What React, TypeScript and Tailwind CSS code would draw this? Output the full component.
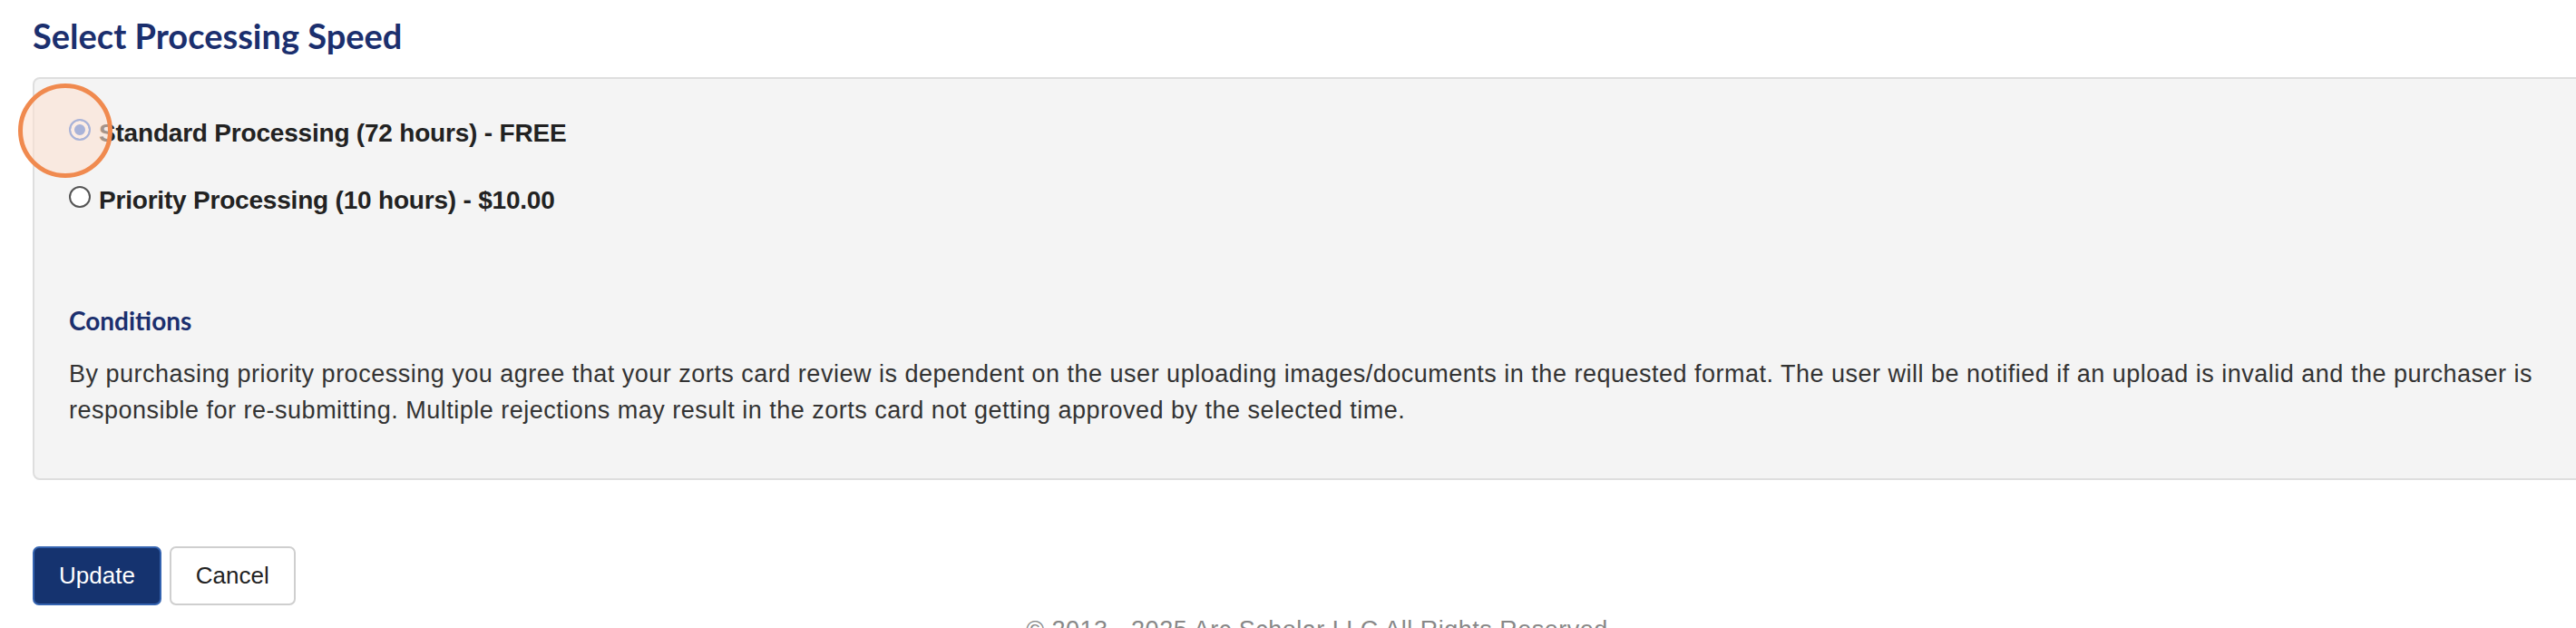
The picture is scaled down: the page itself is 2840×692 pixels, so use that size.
import React from "react";

const heading = "font-['Lato','Open_Sans',sans-serif] font-bold text-[#1b2f6e]";
const body = "font-['Liberation_Sans','Arial',sans-serif]";

function RadioOption({ label, checked }: { label: string; checked?: boolean }) {
  return (
    <label className="flex items-start gap-[9px] cursor-pointer">
      <input
        type="radio"
        name="speed"
        defaultChecked={checked}
        className="mt-[4px] w-[24px] h-[24px] shrink-0 appearance-none rounded-full border-2 border-[#555] bg-white checked:border-[#2f6fe0] checked:bg-[#2f6fe0] checked:shadow-[inset_0_0_0_4px_#fff]"
      />
      <span className={`${body} font-bold text-[28px] leading-[40px] tracking-[-0.2px] text-[#222]`}>{label}</span>
    </label>
  );
}

export default function App() {
  return (
    <div className="w-full h-[692px] overflow-hidden bg-white">
      <div className="relative w-[2904px] px-[36px] pt-[17px]">
        {/* Title */}
        <h2 className={`${heading} text-[38px] leading-[1.2]`}>Select Processing Speed</h2>

        {/* Options panel */}
        <div className="mt-[22px] rounded-[8px] border-2 border-[#dedede] bg-[#f4f4f4] px-[38px] pt-[40px] pb-[55px]">
          <RadioOption label="Standard Processing (72 hours) - FREE" checked />
          <div className="mt-[34px]">
            <RadioOption label="Priority Processing (10 hours) - $10.00" />
          </div>

          <h4 className={`${heading} mt-[96px] text-[28px] leading-[1.2]`}>Conditions</h4>
          <p className={`${body} mt-[22px] text-[27px] leading-[40px] tracking-[0.5px] text-[#333]`}>
            By purchasing priority processing you agree that your zorts card review is dependent on the user uploading
            images/documents in the requested format. The user will be notified if an upload is invalid and the
            purchaser is responsible for re-submitting. Multiple rejections may result in the zorts card not getting
            approved by the selected time.
          </p>
        </div>

        {/* Actions */}
        <div className="mt-[73px] flex gap-[9px]">
          <button className={`${body} h-[65px] px-[27px] rounded-[7px] border-2 border-[#3463b0] bg-[#15336f] text-[26px] text-white`}>
            Update
          </button>
          <button className={`${body} h-[65px] px-[27px] rounded-[7px] border-2 border-[#cfcfcf] bg-white text-[26px] text-[#222]`}>
            Cancel
          </button>
        </div>

        {/* Footer */}
        <p className={`${body} mt-[7px] text-center text-[27px] leading-[40px] tracking-[0.5px] text-[#888]`}>
          © 2013 - 2025 Arc Scholar LLC All Rights Reserved
        </p>

        {/* click highlight */}
        <div className="pointer-events-none absolute left-[20px] top-[92px] w-[104px] h-[104px] rounded-full border-[5px] border-[#f08a4f] bg-[rgba(251,225,210,0.6)]" />
      </div>
    </div>
  );
}
